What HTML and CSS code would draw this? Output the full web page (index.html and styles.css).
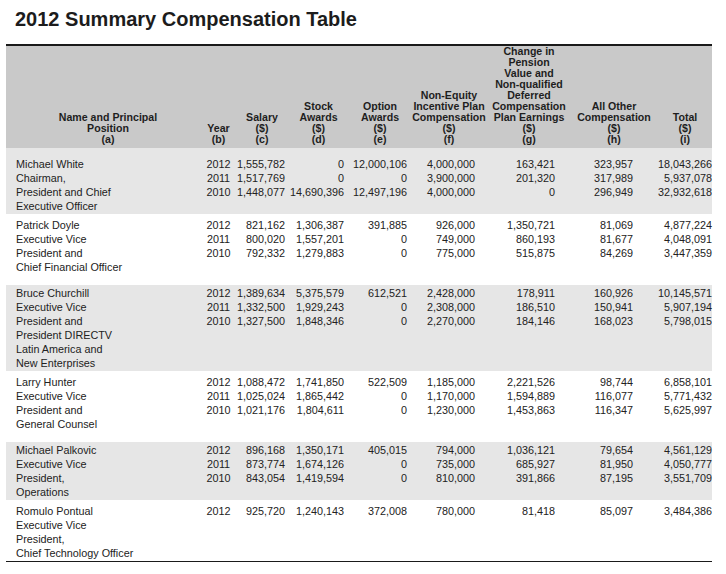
FILE: index.html
```html
<!DOCTYPE html>
<html lang="en">
<head>
<meta charset="utf-8">
<title>2012 Summary Compensation Table</title>
<link rel="stylesheet" href="styles.css">
</head>
<body>
<div class="page">
  <h1 class="title">2012 Summary Compensation Table</h1>
  <table class="comp">
    <colgroup>
      <col class="c-name"><col class="c-year"><col class="c-salary"><col class="c-stock"><col class="c-option"><col class="c-noneq"><col class="c-change"><col class="c-other"><col class="c-total">
    </colgroup>
    <thead>
      <tr>
        <th class="h-name">Name and Principal<br>Position<br>(a)</th>
        <th>Year<br>(b)</th>
        <th>Salary<br>($)<br>(c)</th>
        <th>Stock<br>Awards<br>($)<br>(d)</th>
        <th>Option<br>Awards<br>($)<br>(e)</th>
        <th>Non-Equity<br>Incentive Plan<br>Compensation<br>($)<br>(f)</th>
        <th>Change in<br>Pension<br>Value and<br>Non-qualified<br>Deferred<br>Compensation<br>Plan Earnings<br>($)<br>(g)</th>
        <th>All Other<br>Compensation<br>($)<br>(h)</th>
        <th>Total<br>($)<br>(i)</th>
      </tr>
    </thead>
    <tbody>
      <tr>
        <td class="name">Michael White<br>Chairman,<br>President and Chief<br>Executive Officer</td>
        <td class="year">2012<br>2011<br>2010</td>
        <td class="num salary">1,555,782<br>1,517,769<br>1,448,077</td>
        <td class="num stock">0<br>0<br>14,690,396</td>
        <td class="num option">12,000,106<br>0<br>12,497,196</td>
        <td class="num noneq">4,000,000<br>3,900,000<br>4,000,000</td>
        <td class="num change">163,421<br>201,320<br>0</td>
        <td class="num other">323,957<br>317,989<br>296,949</td>
        <td class="num total">18,043,266<br>5,937,078<br>32,932,618</td>
      </tr>
      <tr>
        <td class="name">Patrick Doyle<br>Executive Vice<br>President and<br>Chief Financial Officer</td>
        <td class="year">2012<br>2011<br>2010</td>
        <td class="num salary">821,162<br>800,020<br>792,332</td>
        <td class="num stock">1,306,387<br>1,557,201<br>1,279,883</td>
        <td class="num option">391,885<br>0<br>0</td>
        <td class="num noneq">926,000<br>749,000<br>775,000</td>
        <td class="num change">1,350,721<br>860,193<br>515,875</td>
        <td class="num other">81,069<br>81,677<br>84,269</td>
        <td class="num total">4,877,224<br>4,048,091<br>3,447,359</td>
      </tr>
      <tr>
        <td class="name">Bruce Churchill<br>Executive Vice<br>President and<br>President DIRECTV<br>Latin America and<br>New Enterprises</td>
        <td class="year">2012<br>2011<br>2010</td>
        <td class="num salary">1,389,634<br>1,332,500<br>1,327,500</td>
        <td class="num stock">5,375,579<br>1,929,243<br>1,848,346</td>
        <td class="num option">612,521<br>0<br>0</td>
        <td class="num noneq">2,428,000<br>2,308,000<br>2,270,000</td>
        <td class="num change">178,911<br>186,510<br>184,146</td>
        <td class="num other">160,926<br>150,941<br>168,023</td>
        <td class="num total">10,145,571<br>5,907,194<br>5,798,015</td>
      </tr>
      <tr>
        <td class="name">Larry Hunter<br>Executive Vice<br>President and<br>General Counsel</td>
        <td class="year">2012<br>2011<br>2010</td>
        <td class="num salary">1,088,472<br>1,025,024<br>1,021,176</td>
        <td class="num stock">1,741,850<br>1,865,442<br>1,804,611</td>
        <td class="num option">522,509<br>0<br>0</td>
        <td class="num noneq">1,185,000<br>1,170,000<br>1,230,000</td>
        <td class="num change">2,221,526<br>1,594,889<br>1,453,863</td>
        <td class="num other">98,744<br>116,077<br>116,347</td>
        <td class="num total">6,858,101<br>5,771,432<br>5,625,997</td>
      </tr>
      <tr>
        <td class="name">Michael Palkovic<br>Executive Vice<br>President,<br>Operations</td>
        <td class="year">2012<br>2011<br>2010</td>
        <td class="num salary">896,168<br>873,774<br>843,054</td>
        <td class="num stock">1,350,171<br>1,674,126<br>1,419,594</td>
        <td class="num option">405,015<br>0<br>0</td>
        <td class="num noneq">794,000<br>735,000<br>810,000</td>
        <td class="num change">1,036,121<br>685,927<br>391,866</td>
        <td class="num other">79,654<br>81,950<br>87,195</td>
        <td class="num total">4,561,129<br>4,050,777<br>3,551,709</td>
      </tr>
      <tr>
        <td class="name">Romulo Pontual<br>Executive Vice<br>President,<br>Chief Technology Officer</td>
        <td class="year">2012</td>
        <td class="num salary">925,720</td>
        <td class="num stock">1,240,143</td>
        <td class="num option">372,008</td>
        <td class="num noneq">780,000</td>
        <td class="num change">81,418</td>
        <td class="num other">85,097</td>
        <td class="num total">3,484,386</td>
      </tr>
    </tbody>
  </table>
</div>
</body>
</html>
```
FILE: styles.css
```css
html, body {
  margin: 0;
  padding: 0;
  background: #ffffff;
}

.page {
  padding: 0 0 0 6px;
  font-family: "Liberation Sans", Arial, Helvetica, sans-serif;
  color: #222222;
}

.title {
  margin: 7px 0 13px 9px;
  font-size: 20px;
  line-height: 24px;
  font-weight: bold;
  color: #1c1c1c;
}

.comp {
  width: 706px;
  table-layout: fixed;
  border-collapse: collapse;
  border-spacing: 0;
  border-top: 2px solid #1a1a1a;
  border-bottom: 1px solid #1a1a1a;
  font-size: 10.8px;
}

.c-name { width: 194px; }
.c-year { width: 37px; }
.c-salary { width: 50px; }
.c-stock { width: 63px; }
.c-option { width: 60px; }
.c-noneq { width: 78px; }
.c-change { width: 82px; }
.c-other { width: 88px; }
.c-total { width: 54px; }

.comp thead th {
  background: #c9c9c9;
  font-size: 10.6px;
  font-weight: bold;
  line-height: 11px;
  color: #1e1e1e;
  text-align: center;
  vertical-align: bottom;
  white-space: nowrap;
  padding: 0 0 3px 0;
}

.comp thead th.h-name {
  padding-left: 10px;
}

.comp tbody td {
  line-height: 14px;
  vertical-align: top;
  white-space: nowrap;
  padding: 4px 0 11px 0;
}

.comp tbody tr:nth-child(odd) td {
  background: #e6e6e6;
  padding-top: 1px;
  padding-bottom: 1px;
}

.comp tbody tr:first-child td {
  padding-top: 9px;
}

.comp tbody tr:last-child td {
  padding-bottom: 1px;
}

.comp td.name {
  padding-left: 10px;
}

.comp td.year {
  text-align: center;
}

.comp td.num {
  text-align: right;
}

.comp td.salary { padding-right: 2px; }
.comp td.stock { padding-right: 6px; }
.comp td.option { padding-right: 3px; }
.comp td.noneq { padding-right: 13px; }
.comp td.change { padding-right: 15px; }
.comp td.other { padding-right: 25px; }
.comp td.total { padding-right: 0; }
```
